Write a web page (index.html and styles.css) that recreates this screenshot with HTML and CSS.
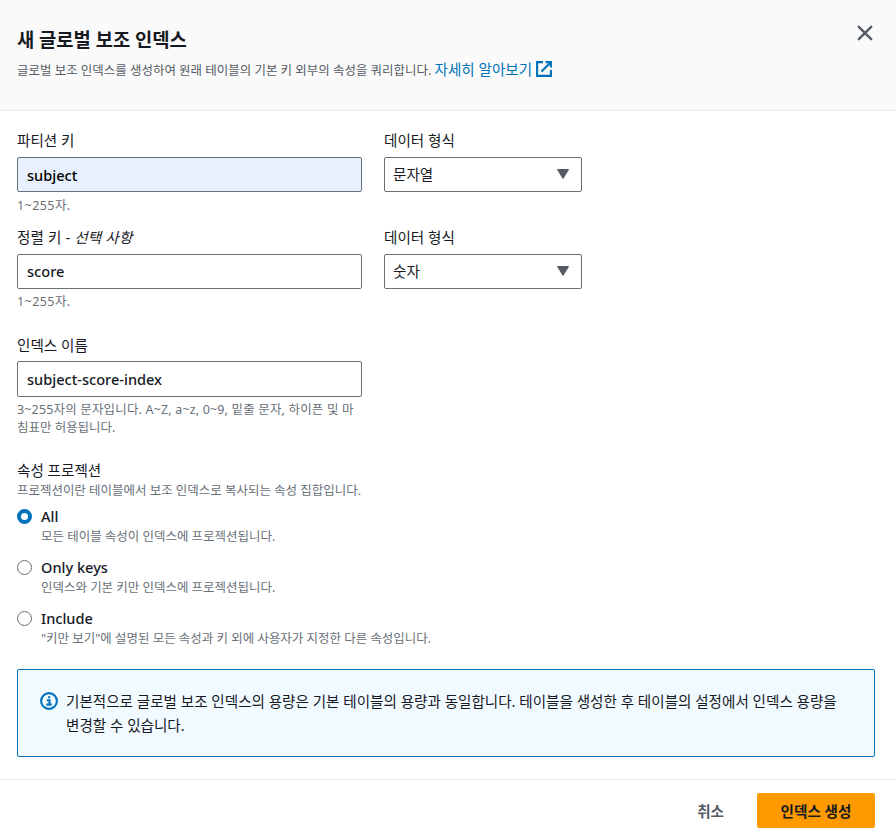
FILE: index.html
```html
<!DOCTYPE html>
<html lang="ko">
<head>
<meta charset="utf-8">
<title>새 글로벌 보조 인덱스</title>
<link rel="stylesheet" href="styles.css">
</head>
<body>
<div class="modal">
  <header class="header">
    <div class="heading">
      <h2 class="title">새 글로벌 보조 인덱스</h2>
      <p class="subtitle">글로벌 보조 인덱스를 생성하여 원래 테이블의 기본 키 외부의 속성을 쿼리합니다. <a class="link">자세히 알아보기<svg class="ext" viewBox="0 0 16 16"><path d="M7 1.100H1.100v13.800h13.800V9M9.500 1.100h5.400v5.400M14.500 1.500L5.500 10.500"/></svg></a></p>
    </div>
    <svg class="close" viewBox="0 0 16 16"><path d="M1.800 1.800l12.400 12.400M14.200 1.800L1.800 14.200"/></svg>
  </header>
  <main class="body">
    <div class="row first">
      <div class="field">
        <div class="label">파티션 키</div>
        <div class="input filled">subject</div>
        <div class="hint short">1~255자.</div>
      </div>
      <div class="field">
        <div class="label">데이터 형식</div>
        <div class="input select">문자열<svg class="caret" viewBox="0 0 12 10"><path d="M.5.5h11L6 9.500z"/></svg></div>
      </div>
    </div>
    <div class="row second">
      <div class="field">
        <div class="label optional">정렬 키 - <i>선택 사항</i></div>
        <div class="input">score</div>
        <div class="hint tight short">1~255자.</div>
      </div>
      <div class="field">
        <div class="label">데이터 형식</div>
        <div class="input select">숫자<svg class="caret" viewBox="0 0 12 10"><path d="M.5.5h11L6 9.500z"/></svg></div>
      </div>
    </div>
    <div class="field name">
      <div class="label">인덱스 이름</div>
      <div class="input tall">subject-score-index</div>
      <div class="hint tight"><span class="wide">3~255자의 문자입니다. A~Z, a~z, 0~9, 밑줄 문자, 하이픈 및 마</span><br>침표만 허용됩니다.</div>
    </div>
    <div class="projection">
      <div class="label flush">속성 프로젝션</div>
      <div class="desc">프로젝션이란 테이블에서 보조 인덱스로 복사되는 속성 집합입니다.</div>
      <div class="radios">
        <div class="radio"><span class="dot on"></span><div><div class="option">All</div><div class="desc">모든 테이블 속성이 인덱스에 프로젝션됩니다.</div></div></div>
        <div class="radio"><span class="dot"></span><div><div class="option">Only keys</div><div class="desc">인덱스와 기본 키만 인덱스에 프로젝션됩니다.</div></div></div>
        <div class="radio"><span class="dot"></span><div><div class="option">Include</div><div class="desc">"키만 보기"에 설명된 모든 속성과 키 외에 사용자가 지정한 다른 속성입니다.</div></div></div>
      </div>
    </div>
    <div class="alert">
      <svg class="info" viewBox="0 0 18 18"><circle cx="9" cy="9" r="7.900"/><path d="M6.800 8.200h2.700v4.300M6.300 12.600h5.400M8 5.300h2.200"/></svg>
      <div>기본적으로 글로벌 보조 인덱스의 용량은 기본 테이블의 용량과 동일합니다. 테이블을 생성한 후 테이블의 설정에서 인덱스 용량을<br>변경할 수 있습니다.</div>
    </div>
  </main>
  <footer class="footer">
    <span class="cancel">취소</span>
    <span class="submit">인덱스 생성</span>
  </footer>
</div>
</body>
</html>
```
FILE: styles.css
```css
* { box-sizing: border-box; }
body {
  margin: 0;
  background: #fff;
  color: #16191f;
  font: 14.57px/22px "Noto Sans", "Noto Sans CJK KR", sans-serif;
  white-space: nowrap;
}
.modal { display: flex; flex-direction: column; height: 840px; overflow: hidden; }
.header {
  display: flex;
  justify-content: space-between;
  height: 111px;
  padding: 25px 23px 0 17px;
  background: #fafafa;
  border-bottom: 1px solid #eaeded;
}
.title { margin: 0; padding-top: 1px; font-size: 18.75px; line-height: 28px; font-weight: 700; }
.subtitle { margin: 4px 0 0; font-size: 12.48px; line-height: 22px; color: #545b64; }
.link { font-size: 14.57px; color: #0073bb; }
.ext { width: 16px; height: 16px; margin-left: 4px; vertical-align: -2px; fill: none; stroke: #0073bb; stroke-width: 2.2; }
.close { width: 16px; height: 16px; fill: none; stroke: #545b64; stroke-width: 2.4; stroke-linecap: round; }
.body { height: 668px; padding: 18px 21px 0 17px; }
.row { display: flex; gap: 22px; }
.first { height: 97px; }
.second { height: 108px; }
.field { width: 198px; }
.field:first-child, .name { width: 345px; }
.label { height: 28px; }
.optional { letter-spacing: .15px; }
.flush { height: 22px; }
.input {
  display: flex;
  align-items: center;
  justify-content: space-between;
  height: 35px;
  padding: 0 12px 1px 9px;
  border: 1px solid #687078;
  border-radius: 2px;
  font-weight: 500;
}
.filled { padding: 1px 12px 0 9px; background: #e8f0fe; color: #000; }
.select { padding: 0 12px 1px 8px; font-weight: 400; }
.tall { height: 36px; }
.caret { width: 12px; height: 10px; fill: #545b64; stroke: #545b64; stroke-linejoin: round; }
.hint, .desc { font-size: 12.48px; line-height: 18px; color: #687078; }
.hint { margin-top: 5px; }
.tight { margin-top: 4px; }
.short { letter-spacing: .45px; }
.wide { letter-spacing: .18px; }
.name { height: 125px; }
.name .label { height: 27px; }
.projection { height: 210px; }
.flush + .desc { padding-top: 1px; }
.radios { display: flex; flex-direction: column; gap: 10px; margin-top: 5px; }
.radio { display: flex; gap: 9px; }
.option { height: 23px; font-weight: 500; }
.dot { width: 15px; height: 15px; margin-top: 4px; border: 1px solid #687078; border-radius: 50%; }
.on { border: 4.5px solid #0073bb; background: #fff; }
.alert {
  display: flex;
  gap: 8px;
  height: 88px;
  padding: 19px 22px;
  border: 1px solid #0073bb;
  border-radius: 2px;
  background: #f1faff;
  line-height: 24px;
}
.info { width: 18px; height: 18px; margin-top: 3px; fill: none; stroke: #0073bb; stroke-width: 2.1; }
.footer {
  display: flex;
  align-items: flex-start;
  justify-content: flex-end;
  gap: 33px;
  height: 61px;
  padding: 13px 21px 0 0;
  border-top: 1px solid #eaeded;
  font-weight: 700;
  line-height: 36px;
}
.cancel { color: #545b64; }
.submit { width: 118px; height: 35px; border-radius: 2px; background: #ff9900; text-align: center; }
```
